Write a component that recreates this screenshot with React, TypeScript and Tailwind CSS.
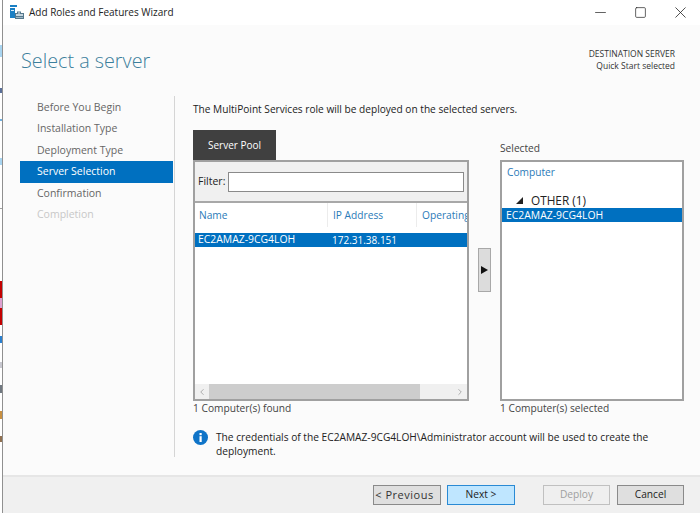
import React from "react";
import { ChevronLeft, ChevronRight, Minus, Square, X } from "lucide-react";

const steps = ["Before You Begin", "Installation Type", "Deployment Type", "Server Selection", "Confirmation", "Completion"];

const WizardIcon = () => (
  <svg width="14" height="15" viewBox="0 0 14 15" className="shrink-0">
    <rect x="0" y="0" width="7" height="2" fill="#1a7fc4" />
    <rect x="0" y="3" width="5" height="10" fill="#1a7fc4" />
    <rect x="1" y="5" width="3" height="1" fill="#d7ecfa" />
    <path d="M5 8h2V6.5h4V8h3v6H5z" fill="#55788c" />
    <rect x="6" y="9" width="7" height="2" fill="#c4d4de" />
    <rect x="6" y="12" width="7" height="1" fill="#9fb6c4" />
    <rect x="8" y="7.5" width="2" height="1" fill="#e8eef2" />
  </svg>
);

const App: React.FC = () => {
  return (
    <div className="flex w-[700px] h-[513px] overflow-hidden bg-white text-[10.2px] text-[#333] font-['Open_Sans',sans-serif]">
      {/* what shows of the desktop behind the window */}
      <div className="flex flex-col w-[3px] h-full shrink-0 border-r border-[#909090] bg-white">
        <div className="h-[45px] shrink-0" />
        <div className="h-[12px] shrink-0 bg-[#a8d4f0]" />
        <div className="h-[31px] shrink-0" />
        <div className="h-[5px] shrink-0 bg-[#5a6f98]" />
        <div className="h-[26px] shrink-0" />
        <div className="h-[2px] shrink-0 bg-[#70b0e0]" />
        <div className="h-[37px] shrink-0" />
        <div className="h-[7px] shrink-0 bg-[#a8d4f0]" />
        <div className="h-[43px] shrink-0" />
        <div className="h-[1px] shrink-0 bg-[#a0a0a0]" />
        <div className="h-[72px] shrink-0" />
        <div className="h-[17px] shrink-0 bg-[#c40000]" />
        <div className="h-[10px] shrink-0 bg-[#dda0d0]" />
        <div className="h-[17px] shrink-0 bg-[#c40000]" />
        <div className="h-[11px] shrink-0" />
        <div className="h-[7px] shrink-0 bg-[#2a80d0]" />
        <div className="h-[19px] shrink-0" />
        <div className="h-[6px] shrink-0 bg-[#c8c8d0]" />
        <div className="h-[17px] shrink-0" />
        <div className="h-[8px] shrink-0 bg-[#707880]" />
        <div className="h-[18px] shrink-0" />
        <div className="h-[8px] shrink-0 bg-[#c89040]" />
        <div className="h-[17px] shrink-0" />
        <div className="h-[6px] shrink-0 bg-[#907050]" />
      </div>

      <div className="flex flex-col flex-1 min-w-0">
        {/* Title bar */}
        <div className="flex items-center h-[25px] shrink-0 bg-white pl-[7px]">
          <WizardIcon />
          <span className="ml-[5px] text-[#222] text-[10px]">Add Roles and Features Wizard</span>
          <div className="ml-auto flex items-center text-[#222]">
            <div className="flex justify-center w-[40px]">
              <Minus size={17} strokeWidth={1} />
            </div>
            <div className="flex justify-center w-[40px]">
              <Square size={13} strokeWidth={1.3} />
            </div>
            <div className="flex justify-center w-[40px]">
              <X size={19} strokeWidth={1} />
            </div>
          </div>
        </div>

        <div className="flex flex-col flex-1 min-h-0 bg-[#fbfbfb]">
          {/* Header */}
          <div className="flex justify-between h-[71px] shrink-0 pl-[18px] pr-[25px]">
            <h1 className="mt-[20px] text-[19.8px] leading-[32px] font-light text-[#3c7f9c]">Select a server</h1>
            <div className="mt-[23px] text-right text-[8.5px] leading-[12px] text-[#333]">
              <div>DESTINATION SERVER</div>
              <div>Quick Start selected</div>
            </div>
          </div>

          {/* Body */}
          <div className="flex h-[361px] shrink-0">
            <nav className="w-[153px] ml-[17px] mt-[1px] shrink-0 text-[10.5px]">
              {steps.map((s) => (
                <div
                  key={s}
                  className={
                    "h-[21.4px] leading-[20px] pl-[17px] " +
                    (s === "Server Selection"
                      ? "bg-[#0070c0] text-white"
                      : s === "Completion"
                        ? "text-[#c8c8c8]"
                        : "text-[#666]")
                  }
                >
                  {s}
                </div>
              ))}
            </nav>
            <div className="w-[1px] ml-[1px] bg-[#d5d5d5] shrink-0" />

            <div className="flex flex-col ml-[18px] w-[491px]">
              <p className="mt-[5px] h-[29px] shrink-0 leading-[16px] text-[10.15px] text-[#222]">
                The MultiPoint Services role will be deployed on the selected servers.
              </p>

              <div className="flex h-[271px] shrink-0">
                {/* Server pool */}
                <div className="flex flex-col w-[276px] shrink-0">
                  <div className="flex items-center justify-center w-[83px] h-[30px] shrink-0 bg-[#404040] text-white text-[10px]">
                    Server Pool
                  </div>
                  <div className="flex flex-col h-[241px] border-2 border-[#a0a0a0] bg-white overflow-hidden">
                    <div className="flex items-center h-[41px] shrink-0 bg-[#f0f0f0] border-b-2 border-[#a8a8a8] pl-[3px] pr-[3px]">
                      <span className="w-[30px] text-[#222] text-[10.5px]">Filter:</span>
                      <div className="flex-1 h-[20px] bg-white border border-[#8a8a8a]" />
                    </div>
                    <div className="flex items-start h-[30px] shrink-0 overflow-hidden text-[#2a7ab8] leading-[24px]">
                      <span className="w-[132px] shrink-0 pl-[4px]">Name</span>
                      <span className="w-[89px] shrink-0 h-[24px] pl-[5px] border-l border-[#ececec]">IP Address</span>
                      <span className="shrink-0 h-[24px] pl-[5px] border-l border-[#ececec]">Operating</span>
                    </div>
                    <div className="flex items-center h-[14px] shrink-0 bg-[#0070c0] text-white">
                      <span className="w-[137px] pl-[3px] text-[10.4px]">EC2AMAZ-9CG4LOH</span>
                      <span className="text-[10px]">172.31.38.151</span>
                    </div>
                    <div className="flex-1" />
                    <div className="flex items-center h-[15px] shrink-0 bg-[#f0f0f0]">
                      <div className="flex items-center justify-center w-[14px] h-full text-[#a0a0a0]">
                        <ChevronLeft size={10} />
                      </div>
                      <div className="w-[211px] h-full bg-[#cdcdcd]" />
                      <div className="ml-auto flex items-center justify-center w-[14px] h-full text-[#a0a0a0]">
                        <ChevronRight size={10} />
                      </div>
                    </div>
                  </div>
                </div>

                {/* Add button */}
                <div className="flex flex-col w-[31px] shrink-0 items-center">
                  <div className="mt-[118px] flex items-center justify-center w-[13px] h-[44px] bg-[#dcdcdc] border border-[#a8a8a8]">
                    <svg width="7" height="8" viewBox="0 0 7 8">
                      <path d="M0 0l7 4-7 4z" fill="#111" />
                    </svg>
                  </div>
                </div>

                {/* Selected */}
                <div className="flex flex-col w-[184px] shrink-0">
                  <div className="h-[30px] leading-[36px] shrink-0 text-[#444]">Selected</div>
                  <div className="flex flex-col h-[241px] border-2 border-[#a0a0a0] bg-white">
                    <div className="h-[30px] shrink-0 pl-[5px] leading-[20px] text-[#2a7ab8]">Computer</div>
                    <div className="flex items-center h-[16px] pt-[1px] shrink-0 pl-[14px] text-[11.8px] text-[#222]">
                      <svg width="7" height="7" viewBox="0 0 7 7" className="mr-[8px]">
                        <path d="M7 0v7H0z" fill="#222" />
                      </svg>
                      OTHER (1)
                    </div>
                    <div className="h-[14px] leading-[14px] shrink-0 pl-[4px] bg-[#0070c0] text-white text-[10.4px]">
                      EC2AMAZ-9CG4LOH
                    </div>
                  </div>
                </div>
              </div>

              <div className="flex h-[14px] shrink-0 leading-[14px] text-[#444]">
                <span className="w-[307px]">1 Computer(s) found</span>
                <span>1 Computer(s) selected</span>
              </div>

              {/* Info */}
              <div className="flex h-[27px] shrink-0 mt-[15px]">
                <svg width="15" height="15" viewBox="0 0 15 15" className="shrink-0">
                  <circle cx="7.5" cy="7.5" r="7.5" fill="#0f74c8" />
                  <rect x="6.5" y="6.2" width="2.2" height="5.8" fill="#fff" />
                  <rect x="6.5" y="3" width="2.2" height="2.2" fill="#fff" />
                </svg>
                <p className="ml-[8px] w-[440px] leading-[14px] text-[#222]">
                  The credentials of the EC2AMAZ-9CG4LOH\Administrator account will be used to create the deployment.
                </p>
              </div>
            </div>
          </div>

          {/* Footer */}
          <div className="flex items-center flex-1 mt-[18px] bg-[#f0f0f0] border-t-2 border-[#e6e6e6] pl-[370px] text-[10.2px]">
            <button className="w-[68px] h-[20px] pr-[5px] border border-[#8a8a8a] bg-[#dfdfdf] text-[#333] text-[11px] tracking-[0.5px]">&lt; Previous</button>
            <button className="w-[68px] h-[20px] ml-[6px] border border-[#2a8ad4] bg-[#bfe6ff] text-[#222]">Next &gt;</button>
            <button className="w-[67px] h-[20px] ml-[28px] border border-[#c0c0c0] bg-[#efefef] text-[#a0a0a0]">Deploy</button>
            <button className="w-[67px] h-[20px] ml-[7px] border border-[#8a8a8a] bg-[#dfdfdf] text-[#222]">Cancel</button>
          </div>
        </div>
      </div>
    </div>
  );
};

export default App;
